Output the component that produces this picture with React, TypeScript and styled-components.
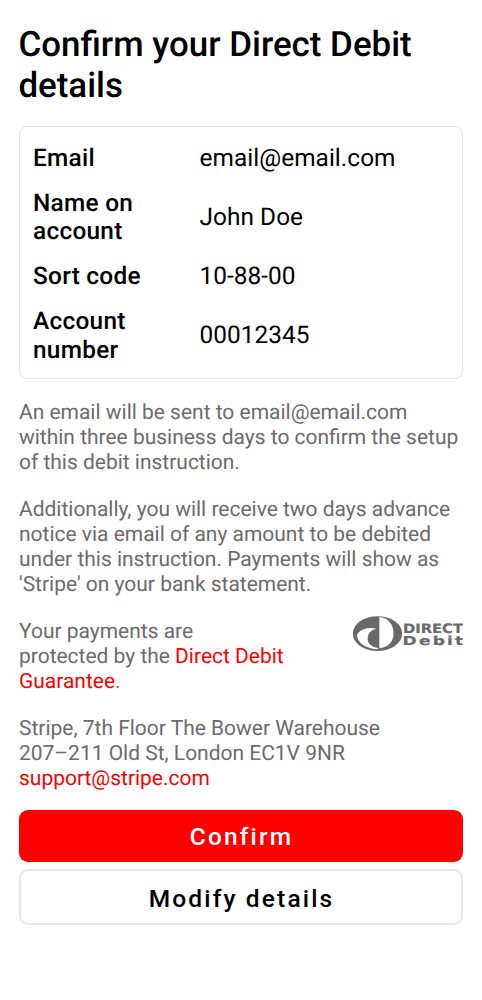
import React from "react";
import styled, { createGlobalStyle } from "styled-components";

const GlobalStyle = createGlobalStyle`
  * { box-sizing: border-box; }
  body { margin: 0; background: #fff; font-family: Roboto, "Liberation Sans", sans-serif; text-rendering: geometricPrecision; }
`;

const Screen = styled.main`
  width: 482px;
  min-height: 1000px;
  padding: 24px 19px 0;
  display: flex;
  flex-direction: column;
`;

const Title = styled.h1`
  margin: 0 0 20px -0.6px;
  font-size: 34.9px;
  line-height: 41px;
  font-weight: 500;
  color: #000;
  white-space: pre-line;
`;

const Card = styled.dl`
  margin: 0 0 22px;
  padding: 17px 13px 13px;
  height: 253px;
  border: 1px solid #e3e3e3;
  border-radius: 8px;
  display: flex;
  flex-direction: column;
  gap: 16px;
`;

const Row = styled.div`
  display: grid;
  grid-template-columns: 166.5px 1fr;
  align-items: center;
  font-size: 24.4px;
  line-height: 28.7px;
  color: #000;
`;

const Label = styled.dt`
  font-weight: 500;
  letter-spacing: 0.27px;
  white-space: pre-line;
`;

const Value = styled.dd`
  margin: 0;
  letter-spacing: 0.05px;
`;

const Paragraph = styled.p`
  margin: 0 0 22px;
  font-size: 20.97px;
  line-height: 25px;
  color: #6b6b6b;
  white-space: pre-line;
`;

const Link = styled.a`
  color: #f00;
`;

const Guarantee = styled.div`
  display: flex;
  justify-content: space-between;
  align-items: flex-start;
`;

const Logo = styled.svg`
  display: block;
  flex: none;
  margin-top: -4px;
`;

const Actions = styled.div`
  display: flex;
  flex-direction: column;
  gap: 7px;
  margin-top: -4px;
`;

const Button = styled.button<{ $primary?: boolean }>`
  height: ${(p) => (p.$primary ? 52 : 56)}px;
  padding: ${(p) => (p.$primary ? "1px 0 0 1px" : "2px 0 0 1px")};
  border: ${(p) => (p.$primary ? "none" : "2px solid #e8e8e8")};
  border-radius: 9px;
  background: ${(p) => (p.$primary ? "#f00" : "#fff")};
  color: ${(p) => (p.$primary ? "#fff" : "#000")};
  font: 500 24.5px Roboto, "Liberation Sans", sans-serif;
  letter-spacing: 2.15px;
`;

const details = [
  ["Email", "email@email.com"],
  ["Name on\naccount", "John Doe"],
  ["Sort code", "10-88-00"],
  ["Account\nnumber", "00012345"],
];

const DirectDebitLogo = () => (
  <Logo width="111" height="37" viewBox="0 0 111 37" role="img" aria-label="Direct Debit">
    <ellipse cx="25.5" cy="17.6" rx="24.7" ry="17.4" fill="#696969" />
    <path fill="#fff" d="M27.3 0.9C36 1.2 41.5 8.3 41.5 17.2C41.5 26 36 31.7 27.3 32Z" />
    <path fill="#fff" d="M24.6 12.8C20 11.4 15.5 11.8 11.7 13.2C8 14.6 5.4 17 4.9 19.4C5.9 27.4 14.4 32.8 25.8 33.2L26.5 32C20 31.3 15.6 28 15.6 22.8C15.6 17.8 19 14 24.6 12.8Z" />
    <g fontFamily="DejaVu Sans, sans-serif" fontWeight="700" fill="#696969" stroke="#696969" strokeWidth="0.2">
      <text x="51" y="16.7" fontSize="13" textLength="60" lengthAdjust="spacingAndGlyphs">DIRECT</text>
      <text transform="translate(50.6 28.6) scale(1.38 1)" fontSize="12.3" textLength="43.9">Debit</text>
    </g>
  </Logo>
);

export default function App() {
  return (
    <Screen>
      <GlobalStyle />
      <Title>{"Confirm your Direct Debit\ndetails"}</Title>
      <Card>
        {details.map(([label, value]) => (
          <Row key={label}>
            <Label>{label}</Label>
            <Value>{value}</Value>
          </Row>
        ))}
      </Card>
      <Paragraph>{"An email will be sent to email@email.com\nwithin three business days to confirm the setup\nof this debit instruction."}</Paragraph>
      <Paragraph>{"Additionally, you will receive two days advance\nnotice via email of any amount to be debited\nunder this instruction. Payments will show as\n'Stripe' on your bank statement."}</Paragraph>
      <Guarantee>
        <Paragraph>
          {"Your payments are\nprotected by the "}
          <Link>{"Direct Debit\nGuarantee"}</Link>.
        </Paragraph>
        <DirectDebitLogo />
      </Guarantee>
      <Paragraph>
        {"Stripe, 7th Floor The Bower Warehouse\n207–211 Old St, London EC1V 9NR\n"}
        <Link>support@stripe.com</Link>
      </Paragraph>
      <Actions>
        <Button $primary>Confirm</Button>
        <Button>Modify details</Button>
      </Actions>
    </Screen>
  );
}
